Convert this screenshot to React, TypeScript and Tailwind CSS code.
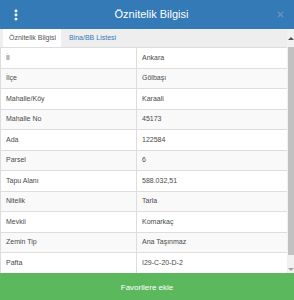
import { EllipsisVertical, X } from "lucide-react";

const rows: [string, string][] = [
  ["İl", "Ankara"],
  ["İlçe", "Gölbaşı"],
  ["Mahalle/Köy", "Karaali"],
  ["Mahalle No", "45173"],
  ["Ada", "122584"],
  ["Parsel", "6"],
  ["Tapu Alanı", "588.032,51"],
  ["Nitelik", "Tarla"],
  ["Mevkii", "Komarkaç"],
  ["Zemin Tip", "Ana Taşınmaz"],
  ["Pafta", "I29-C-20-D-2"],
];

export default function App() {
  return (
    <div className="w-[294px] h-[300px] flex flex-col bg-white text-[#4a4a4a] font-['Liberation_Sans',Arial,sans-serif] overflow-hidden">
      {/* header */}
      <div className="h-[29px] bg-[#337ab7] flex items-center px-2 text-white">
        <EllipsisVertical size={14} strokeWidth={3} className="ml-[1px]" />
        <div className="flex-1 text-center text-[11px] pl-1">Öznitelik Bilgisi</div>
        <X size={9} strokeWidth={3} className="text-[#6d95bf] mr-[1px]" />
      </div>

      <div className="flex-1 flex min-h-0">
        <div className="flex-1 flex flex-col">
          {/* tabs */}
          <div className="h-[18px] bg-[#eeeeee] flex items-end pl-[3px] text-[7px]">
            <div className="h-[18px] w-[58px] bg-white flex items-center pl-[6px] text-[#555]">
              Öznitelik Bilgisi
            </div>
            <div className="h-[18px] flex items-center pl-[8px] text-[#337ab7]">Bina/BB Listesi</div>
          </div>

          {/* table */}
          <div className="flex-1 border-l border-[#ddd] text-[7px]">
            {rows.map(([k, v], i) => (
              <div
                key={k}
                className={`h-[20.5px] flex border-t border-[#ddd] ${i % 2 === 1 ? "bg-[#f9f9f9]" : "bg-white"}`}
              >
                <div className="w-[136px] flex items-center pl-[5px] border-r border-[#ddd]">{k}</div>
                <div className="flex-1 flex items-center pl-[5px]">{v}</div>
              </div>
            ))}
          </div>
        </div>

        {/* scrollbar */}
        <div className="w-[7px] bg-[#f1f1f1] flex flex-col items-center">
          <div className="h-[18px] flex items-center justify-center">
            <div className="w-0 h-0 border-l-[3px] border-r-[3px] border-b-[3px] border-l-transparent border-r-transparent border-b-[#505050]" />
          </div>
          <div className="flex-1 w-[6px] bg-[#c1c1c1] mb-[10px]" />
          <div className="h-[8px] flex items-center justify-center">
            <div className="w-0 h-0 border-l-[3px] border-r-[3px] border-t-[3px] border-l-transparent border-r-transparent border-t-[#a3a3a3]" />
          </div>
        </div>
      </div>

      {/* footer button */}
      <div className="h-[27px] bg-[#5cb85c] flex items-center justify-center pt-[2px] text-white text-[8px]">
        Favorilere ekle
      </div>
    </div>
  );
}
